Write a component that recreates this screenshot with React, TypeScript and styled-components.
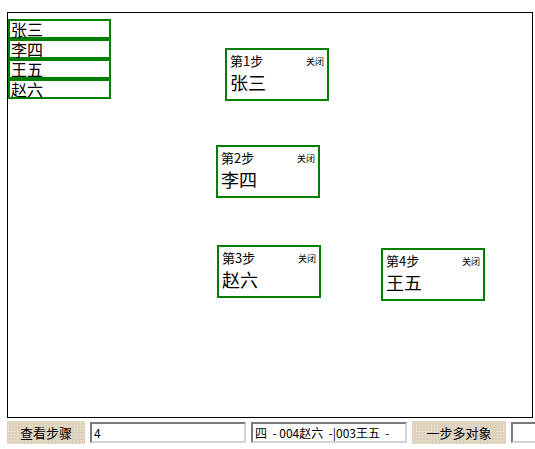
import React from 'react';
import styled, { createGlobalStyle } from 'styled-components';

type StepType = {
    step: number;
    name: string;
    x: number;
    y: number;
};

const names = ['张三', '李四', '王五', '赵六'];

const steps: StepType[] = [
    { step: 1, name: '张三', x: 217, y: 35 },
    { step: 2, name: '李四', x: 208, y: 132 },
    { step: 3, name: '赵六', x: 209, y: 232 },
    { step: 4, name: '王五', x: 373, y: 235 },
];

const GlobalStyle = createGlobalStyle`
    body {
        margin: 0;
        font-family: "Noto Sans CJK SC", "DejaVu Sans", sans-serif;
        background: #fff;
    }
`;

const Step = (props: StepType) => {
    return (
        <Card style={{ left: props.x, top: props.y }}>
            <CardHead>
                <StepTitle>第{props.step}步</StepTitle>
                <Close>关闭</Close>
            </CardHead>
            <CardName>{props.name}</CardName>
        </Card>
    );
};

export default function App() {
    return (
        <Page>
            <GlobalStyle />
            <Canvas>
                <NameList>
                    {names.map((n) => (
                        <NameItem key={n}>{n}</NameItem>
                    ))}
                </NameList>
                {steps.map((s) => (
                    <Step key={s.step} {...s} />
                ))}
            </Canvas>
            <Toolbar>
                <Button $width={78}>查看步骤</Button>
                <Field $width={156} value="4" readOnly />
                <Field $width={156} value="四  - 004赵六  -|003王五  -" readOnly />
                <Button $width={94}>一步多对象</Button>
                <Field $width={40} value="" readOnly />
            </Toolbar>
        </Page>
    );
}

const Page = styled.div`
    padding: 12px 0 0 7px;
    width: 535px;
    box-sizing: border-box;
    overflow: hidden;
`;

const Canvas = styled.div`
    position: relative;
    width: 526px;
    height: 406px;
    border: 1px solid #000;
    box-sizing: border-box;
`;

const NameList = styled.div`
    display: flex;
    flex-direction: column;
    width: 103px;
    margin-top: 6px;
`;

const NameItem = styled.div`
    height: 20px;
    border: 2px solid #008000;
    box-sizing: border-box;
    font-size: 16px;
    line-height: 16px;
    color: #000;
    white-space: nowrap;
    padding-left: 1px;
`;

const Card = styled.div`
    position: absolute;
    width: 104px;
    height: 53px;
    border: 2px solid #008000;
    box-sizing: border-box;
    background: #fff;
    padding: 2px 4px 0 3px;
`;

const CardHead = styled.div`
    display: flex;
    justify-content: space-between;
    align-items: center;
`;

const StepTitle = styled.span`
    font-size: 13px;
    line-height: 18px;
    color: #000;
`;

const Close = styled.span`
    font-size: 9px;
    color: #000;
    margin-right: -1px;
`;

const CardName = styled.div`
    font-size: 18px;
    line-height: 24px;
    color: #000;
`;

const Toolbar = styled.div`
    display: flex;
    align-items: center;
    gap: 5px;
    margin-top: 2px;
    height: 24px;
`;

const Button = styled.button<{ $width: number }>`
    width: ${(p) => p.$width}px;
    height: 23px;
    flex-shrink: 0;
    border: none;
    padding: 0;
    font-family: "Noto Sans CJK SC", sans-serif;
    font-size: 13px;
    color: #000;
    background-color: #ddd2c0;
    background-image: radial-gradient(#f4ecc0 35%, transparent 36%),
        radial-gradient(#ecc8c8 35%, transparent 36%);
    background-size: 3px 3px;
    background-position: 0 0, 1.5px 1.5px;
`;

const Field = styled.input<{ $width: number }>`
    width: ${(p) => p.$width}px;
    height: 21px;
    flex-shrink: 0;
    box-sizing: border-box;
    border: 2px solid;
    border-color: #7a7a7a #d4d4d4 #d4d4d4 #7a7a7a;
    padding: 0 2px;
    font-family: "Noto Sans CJK SC", sans-serif;
    font-size: 12px;
    color: #000;
    background: #fff;
    outline: none;
`;
